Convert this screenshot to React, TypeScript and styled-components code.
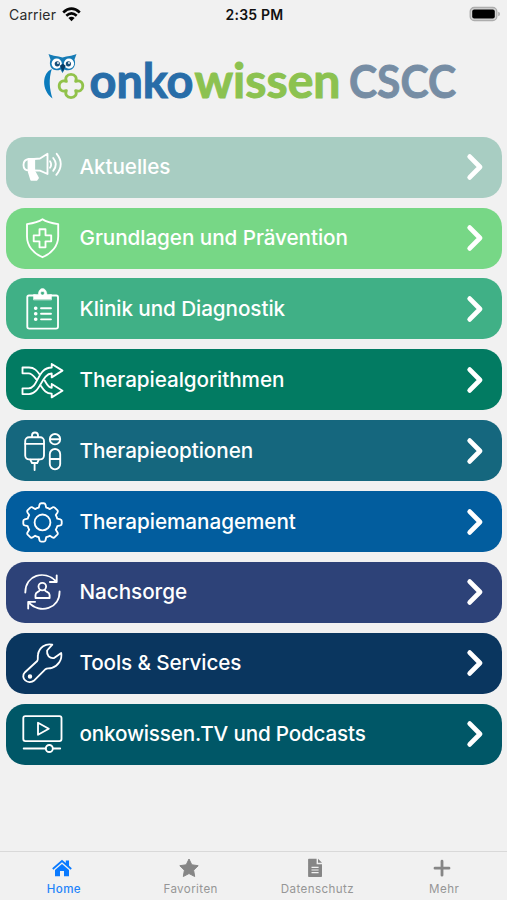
import React from "react";
import styled, { createGlobalStyle } from "styled-components";

const GlobalStyle = createGlobalStyle`
  * { box-sizing: border-box; }
  body { margin: 0; background: #f1f1f1; }
`;

const Screen = styled.div`
  width: 100%;
  height: 900px;
  display: flex;
  flex-direction: column;
  overflow: hidden;
  background: #f1f1f1;
  font-family: Inter, "Liberation Sans", sans-serif;
`;

const StatusBar = styled.header`
  height: 28px;
  padding: 0 7px 0 9px;
  display: grid;
  grid-template-columns: 1fr auto 1fr;
  align-items: center;
  color: #111;
`;

const Carrier = styled.span`
  display: flex;
  align-items: center;
  gap: 6px;
  font-size: 14px;
  letter-spacing: 0.18px;
  color: #2b2b2b;
`;

const Clock = styled.span`
  font-size: 14px;
  font-weight: 600;
  letter-spacing: 0.2px;
`;

const Battery = styled.svg`
  width: 31px;
  height: 16px;
  justify-self: end;
`;

const LogoArea = styled.div`
  height: 108px;
`;

const Logo = styled.svg`
  display: block;
  width: 507px;
  height: 108px;
  font-family: Lato, "Open Sans", sans-serif;
  font-weight: 700;
`;

const Menu = styled.main`
  flex: 1;
  display: flex;
  flex-direction: column;
  gap: 9.85px;
  padding: 0.8px 5px 0 6px;
`;

const MenuItem = styled.a<{ $color: string }>`
  height: 61px;
  flex: none;
  display: flex;
  align-items: center;
  padding: 0 18px 0 14px;
  border-radius: 19px;
  background: ${(p) => p.$color};
  color: #fff;
`;

const MenuIcon = styled.svg`
  width: 44px;
  height: 44px;
  flex: none;
  fill: none;
  stroke: #fff;
  stroke-width: 1.85;
  stroke-linecap: round;
  stroke-linejoin: round;
  overflow: visible;
`;

const Label = styled.span<{ $spacing: number }>`
  flex: 1;
  margin-left: 15.5px;
  font-size: 20.7px;
  line-height: 28px;
  font-weight: 500;
  letter-spacing: ${(p) => p.$spacing}px;
  white-space: nowrap;
`;

const Chevron = styled.svg`
  width: 18px;
  height: 30px;
  flex: none;
`;

const TabBar = styled.nav`
  height: 49px;
  flex: none;
  display: grid;
  grid-template-columns: repeat(4, 1fr);
  border-top: 1px solid #d9d9d9;
`;

const Tab = styled.a<{ $active?: boolean }>`
  display: flex;
  flex-direction: column;
  align-items: center;
  padding-top: 5px;
  color: ${(p) => (p.$active ? "#0a7aff" : "#868686")};
`;

const TabIcon = styled.svg`
  width: 22px;
  height: 22px;
  fill: currentColor;
  margin-right: 3px;
`;

const TabLabel = styled.span<{ $active?: boolean }>`
  margin-top: 3px;
  padding-left: 1px;
  font-size: 11.6px;
  line-height: 15px;
  font-weight: ${(p) => (p.$active ? 500 : 400)};
  letter-spacing: 0.4px;
  color: ${(p) => (p.$active ? "#1f84fa" : "#969696")};
`;

const items = [
  {
    label: "Aktuelles",
    color: "#a8cdc2",
    spacing: -0.09,
    icon: (
      <>
        <path d="M14 14H9Q3.5 14.5 3.5 20T9 25.5H14M14 14L20 13.5L27.5 8.8V29L20 25.7L14 25.5" />
        <path d="M8.5 14H14.2V25.5H8.5Z" fill="#fff" />
        <path d="M8.8 27H14.8L18 33L16.5 34.8H11.2Z" fill="#fff" />
        <path d="M30 16.2Q32.3 19.5 30 22.8M33.2 13Q38.5 19.3 33.2 25.8M36.7 8.8Q45 19 36.3 29.8" />
      </>
    ),
  },
  {
    label: "Grundlagen und Prävention",
    color: "#77d786",
    spacing: -0.07,
    icon: (
      <>
        <path d="M22.5 3.3C18 6.5 12.5 7.4 7 8.1V20.5C7 30 13.5 37.5 22.5 41.2C31.5 37.5 38.2 30 38.2 20.5V8.1C32.5 7.4 27 6.5 22.5 3.3Z" />
        <path d="M19.5 13.2H25.5V19.3H31.2V25.3H25.5V31.3H19.5V25.3H13.7V19.3H19.5Z" />
      </>
    ),
  },
  {
    label: "Klinik und Diagnostik",
    color: "#40b086",
    spacing: -0.08,
    icon: (
      <>
        <path d="M15 8.5H9Q7.3 8.5 7.3 10.2V39.8Q7.3 41.6 9.3 41.6H36Q38 41.6 38 39.8V10.2Q38 8.5 36.3 8.5H30" />
        <path
          d="M13.5 12.6V7.5H18.3C18.5 4 20 1.6 22.5 1.6S26.7 4 27 7.5H31.5V12.6ZM22.5 4.2A1.9 1.9 0 1 0 22.5 8A1.9 1.9 0 1 0 22.5 4.2Z"
          fill="#fff"
          fillRule="evenodd"
          strokeWidth="0.5"
        />
        <path d="M21 21.2H31M21 26.7H31M21 32.3H31" />
        <path d="M15.6 21.2H15.8M15.6 26.7H15.8M15.6 32.3H15.8" strokeWidth="3.5" />
      </>
    ),
  },
  {
    label: "Therapiealgorithmen",
    color: "#027b62",
    spacing: -0.08,
    icon: (
      <>
        <path d="M2.5 9.5H9C14.5 9.5 17 12.8 19.7 16.5M2.5 9.5V15.3H8.5C12 15.3 13.8 18 16.1 21.1M2.5 36.1V30.3H8.5C18.5 30.3 17 9.5 31.7 9.5V6L42.5 12.6L31.7 19.4V15.5C21.5 15.5 20.5 36.1 9 36.1Z" />
        <path d="M24.7 22.5C26.8 26 28.2 29.7 31.7 29.7V26L42.5 32.7L31.7 39.4V35.7C25 35.5 23.3 31.2 20.4 27.2" />
      </>
    ),
  },
  {
    label: "Therapieoptionen",
    color: "#15677e",
    spacing: -0.09,
    icon: (
      <>
        <rect x="5.2" y="8.2" width="18.8" height="22.2" rx="3.8" />
        <path d="M12 8V6.5Q12 3.5 15 3.5T18 6.5V8M5.2 14.8H24M10.3 30.6L12 34H17.2L18.8 30.6M14.6 34.2V41" />
        <circle cx="35" cy="10.2" r="5.2" />
        <path d="M30 10.2H40M29.8 30H40.2" />
        <rect x="29.8" y="20" width="10.4" height="20.3" rx="5.2" />
      </>
    ),
  },
  {
    label: "Therapiemanagement",
    color: "#025d9e",
    spacing: -0.05,
    icon: (
      <>
        <path d="M18.8 7.6L19.5 4.6Q20 3.2 21.2 3.2H23.8Q25 3.2 25.5 4.6L26.2 7.6Q28.2 8 29.9 9.1L32.5 7.4Q33.7 6.7 34.7 7.6L37.3 10.2Q38.2 11.2 37.5 12.4L35.8 15Q36.8 16.7 37.3 18.7L40.3 19.4Q41.7 19.8 41.7 21.1V23.7Q41.7 25 40.3 25.4L37.3 26.1Q36.8 28.1 35.8 29.8L37.5 32.4Q38.2 33.6 37.3 34.6L34.7 37.2Q33.7 38.1 32.5 37.4L29.9 35.7Q28.2 36.7 26.2 37.2L25.5 40.2Q25 41.6 23.8 41.6H21.2Q20 41.6 19.5 40.2L18.8 37.2Q16.8 36.7 15.1 35.7L12.5 37.4Q11.3 38.1 10.3 37.2L7.7 34.6Q6.8 33.6 7.5 32.4L9.2 29.8Q8.2 28.1 7.7 26.1L4.7 25.4Q3.3 25 3.3 23.7V21.1Q3.3 19.8 4.7 19.4L7.7 18.7Q8.2 16.7 9.2 15L7.5 12.4Q6.8 11.2 7.7 10.2L10.3 7.6Q11.3 6.7 12.5 7.4L15.1 9.1Q16.8 8 18.8 7.6Z" />
        <circle cx="22.5" cy="22.4" r="7.9" />
      </>
    ),
  },
  {
    label: "Nachsorge",
    color: "#2d4278",
    spacing: -0.05,
    icon: (
      <>
        <path d="M5.3 22.5C5.3 5 24.5-0.5 36.3 11.5M36.7 5.3V12H29.9M39.6 21.5C39.6 38.8 20.5 44.5 8.5 32.5M8.2 38.5V31.8H15.1" />
        <circle cx="22.3" cy="16.6" r="3.8" />
        <path d="M19.8 20.2C18.5 22.2 15.5 22 15.5 25V28H29.6V25C29.6 22 26.3 22.2 24.8 20.2" />
      </>
    ),
  },
  {
    label: "Tools & Services",
    color: "#0a365f",
    spacing: -0.14,
    icon: (
      <>
        <path d="M5 31.2L17.2 20C18.5 18.8 17.4 16.5 18 13.5C19.2 6.5 25.7 2 32.3 3.7L27.1 9.5C26.5 14.3 29.5 17.7 34.1 17L41.2 12C42.4 19 38 25 32 26.8C28.5 27.8 27 26.8 25.5 28.2L14.5 39.2C8 44.5-0.5 37 5 31.2Z" />
        <circle cx="10" cy="35.4" r="1.3" fill="#fff" />
      </>
    ),
  },
  {
    label: "onkowissen.TV und Podcasts",
    color: "#005767",
    spacing: -0.2,
    icon: (
      <>
        <rect x="3.3" y="4.1" width="38.2" height="25" rx="2" />
        <path d="M18 10.8V22.7L28.8 16.7ZM3.7 36.5H25.8M33 36.5H40.2" />
        <circle cx="29.3" cy="36.5" r="3.5" />
      </>
    ),
  },
];

const tabs = [
  {
    label: "Home",
    icon: (
      <>
        <path d="M1.2 11.3L11 2.8L14.8 6V3.6H18V8.8L20.8 11.3L19.7 12.7L11 5.2L2.3 12.7Z" />
        <path d="M11 6.9L18 12.9V19.2H13V14.1H9V19.2H4V12.9Z" />
      </>
    ),
  },
  {
    label: "Favoriten",
    icon: (
      <path
        d="M11 2L13.8 7.8L20.2 8.7L15.6 13.2L16.7 19.5L11 16.5L5.3 19.5L6.4 13.2L1.8 8.7L8.2 7.8Z"
        stroke="currentColor"
        strokeWidth="1"
        strokeLinejoin="round"
      />
    ),
  },
  {
    label: "Datenschutz",
    icon: (
      <path
        fillRule="evenodd"
        d="M4.9 1.8H12.6V7.2H18V19.2Q18 20 17.2 20H4.9Q4.1 20 4.1 19.2V2.6Q4.1 1.8 4.9 1.8ZM14 1.8L18 5.8H14ZM7.5 9.8V11H14.6V9.8ZM7.5 12.4V13.6H14.6V12.4ZM7.5 15V16.2H14.6V15Z"
      />
    ),
  },
  {
    label: "Mehr",
    icon: <path d="M11 4.2V18.2M4 11.2H18" stroke="currentColor" strokeWidth="2.8" strokeLinecap="round" />,
  },
];

function OnkoLogo() {
  return (
    <Logo viewBox="0 28 507 108" role="img" aria-label="onkowissen CSCC">
      <path d="M51.8 69C42 73 41 90 52.5 98.5C49.5 89 48.5 79 51.8 69Z" fill="#0b7bbc" />
      <path
        d="M48.5 54C54 56.5 57 55.5 62.5 57.5C68 55.5 71 56.5 76.5 54L74.5 59.5C77 67 71 72.5 64.5 69.5L62.5 73L60.5 69.5C53.5 72.5 48 67 50.5 59.5Z"
        fill="#167bb5"
      />
      <circle cx="56.7" cy="63.6" r="5.1" fill="#fff" />
      <circle cx="69" cy="63.6" r="5.1" fill="#fff" />
      <circle cx="57.3" cy="63.8" r="2.6" fill="#174f79" />
      <circle cx="68.4" cy="63.8" r="2.6" fill="#174f79" />
      <circle cx="58" cy="63" r="0.9" fill="#fff" />
      <circle cx="69" cy="63" r="0.9" fill="#fff" />
      <path d="M59.8 65.7L62.8 63.8L65.7 65.7L62.8 71.8Z" fill="#063d68" />
      <path
        d="M66.4 81.4C64.6 77.5 67 74.4 71 74.4S77.4 77.5 75.6 81.4C79.5 79.7 82.8 82 82.8 86S79.5 92.3 75.6 90.6C77.4 94.5 75 97.6 71 97.6S64.6 94.5 66.4 90.6C62.5 92.3 59.2 90 59.2 86S62.5 79.7 66.4 81.4Z"
        fill="#f1f1f1"
        stroke="#91c24a"
        strokeWidth="2.8"
        strokeLinejoin="round"
      />
      <text x="89.5" y="98" fontSize="47.5" fill="#286da8" stroke="#286da8" strokeWidth="1" textLength="104" lengthAdjust="spacingAndGlyphs">onko</text>
      <text x="194.5" y="98" fontSize="47.5" fill="#8cc250" stroke="#8cc250" strokeWidth="1" textLength="146" lengthAdjust="spacingAndGlyphs">wissen</text>
      <text x="349" y="98" fontSize="45.5" fill="#768da4" stroke="#768da4" strokeWidth="0.9" textLength="107" lengthAdjust="spacingAndGlyphs">CSCC</text>
    </Logo>
  );
}

export default function App() {
  return (
    <>
      <GlobalStyle />
      <Screen>
        <StatusBar>
          <Carrier>
            Carrier
            <svg width="19" height="15" viewBox="0 0 19 15" fill="none" stroke="#050505" strokeWidth="2.7">
              <path d="M1.2 5.4Q9.5-2 17.8 5.4M4.3 8.7Q9.5 4.2 14.7 8.7" />
              <path d="M6.4 10.9Q9.5 8.4 12.6 10.9L9.5 14.2Z" fill="#050505" stroke="none" />
            </svg>
          </Carrier>
          <Clock>2:35 PM</Clock>
          <Battery viewBox="0 0 31 16">
            <rect x="1.2" y="1.5" width="26.6" height="13" rx="4" fill="#d4d4d4" stroke="#adadad" strokeWidth="1.3" />
            <rect x="3.2" y="3.5" width="22.6" height="9" rx="2" fill="#000" />
            <path d="M29.2 5.8Q31 6.3 31 8T29.2 10.2Z" fill="#adadad" />
          </Battery>
        </StatusBar>
        <LogoArea>
          <OnkoLogo />
        </LogoArea>
        <Menu>
          {items.map((item) => (
            <MenuItem key={item.label} $color={item.color}>
              <MenuIcon viewBox="0 0 44 44">{item.icon}</MenuIcon>
              <Label $spacing={item.spacing}>{item.label}</Label>
              <Chevron viewBox="0 0 18 30">
                <path d="M3.7 4.6L14 15L3.7 25.4" fill="none" stroke="#fff" strokeWidth="4.8" strokeLinecap="round" strokeLinejoin="round" />
              </Chevron>
            </MenuItem>
          ))}
        </Menu>
        <TabBar>
          {tabs.map((tab, i) => (
            <Tab key={tab.label} $active={i === 0}>
              <TabIcon viewBox="0 0 22 22">{tab.icon}</TabIcon>
              <TabLabel $active={i === 0}>{tab.label}</TabLabel>
            </Tab>
          ))}
        </TabBar>
      </Screen>
    </>
  );
}
